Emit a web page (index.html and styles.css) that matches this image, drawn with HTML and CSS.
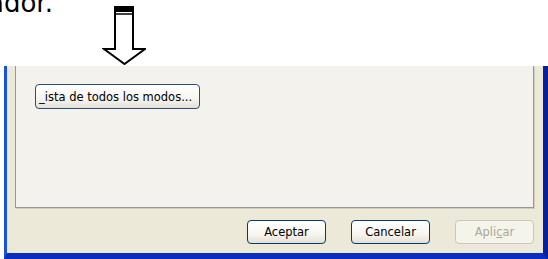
FILE: index.html
```html
<!DOCTYPE html>
<html lang="es">
<head>
<meta charset="utf-8">
<link rel="stylesheet" href="styles.css">
</head>
<body>
<div class="page">
  <div class="head">
    <span class="caption">ador.</span>
    <svg class="arrow" width="44" height="60" viewBox="0 0 44 60">
      <path d="M13 2 V44 H2 L22.5 59 L43 44 H31 V2" fill="#fff" stroke="#000" stroke-width="2" stroke-linejoin="miter"/>
      <rect x="12" y="1" width="20" height="6" fill="#000"/>
      <line x1="12" y1="9" x2="32" y2="9" stroke="#000" stroke-width="1.5"/>
    </svg>
  </div>
  <div class="dialog">
    <div class="panel">
      <button class="btn list">_ista de todos los modos...</button>
    </div>
    <div class="actions">
      <button class="btn">Aceptar</button>
      <button class="btn">Cancelar</button>
      <button class="btn disabled">Apli<u>c</u>ar</button>
    </div>
  </div>
</div>
</body>
</html>
```

FILE: styles.css
```css
html, body {
  margin: 0;
  padding: 0;
  background: #fff;
}
.page {
  width: 548px;
  height: 259px;
  overflow: hidden;
  display: flex;
  flex-direction: column;
}
.head {
  height: 66px;
  display: grid;
  grid-template-columns: 102px 44px;
  overflow: hidden;
}
.caption {
  font-family: "DejaVu Sans", Verdana, sans-serif;
  font-size: 26px;
  line-height: 30px;
  margin-top: -12px;
  margin-left: -12px;
  color: #000;
  white-space: nowrap;
}
.arrow {
  display: block;
  margin-top: 5px;
}
.dialog {
  margin-left: 4px;
  width: 544px;
  flex: 1;
  box-sizing: border-box;
  background: #ece9d8;
  border-left: 3px solid #1553e6;
  border-right: 5px solid #0a1f9e;
  border-bottom: 6px solid #0a2fc0;
  padding: 0 9px 9px 8px;
  display: flex;
  flex-direction: column;
}
.panel {
  height: 142px;
  box-sizing: border-box;
  background: #f3f2ec;
  border: 1px solid #919b9c;
  border-top: none;
  box-shadow: 1px 1px 0 #d0cdc0;
  padding: 18px 0 0 19px;
}
.btn {
  font-family: Tahoma, "DejaVu Sans", sans-serif;
  font-size: 11.5px;
  color: #000;
  height: 24px;
  width: 79px;
  padding: 0;
  border: 1px solid #003c74;
  border-radius: 4px;
  background: linear-gradient(#ffffff 0%, #f6f5f0 60%, #e3e0d6 100%);
  box-sizing: border-box;
  text-align: center;
}
.btn.list {
  width: 165px;
  height: 25px;
  padding: 0 0 0 3px;
  text-align: left;
  border-color: #2c4d7c;
}
.actions {
  margin-top: 12px;
  display: flex;
  justify-content: flex-end;
  gap: 25px;
}
.btn.disabled {
  color: #aca899;
  border-color: #c9c7ba;
  background: #f5f4ea;
}
.btn.disabled u {
  text-decoration-color: #aca899;
}
```
